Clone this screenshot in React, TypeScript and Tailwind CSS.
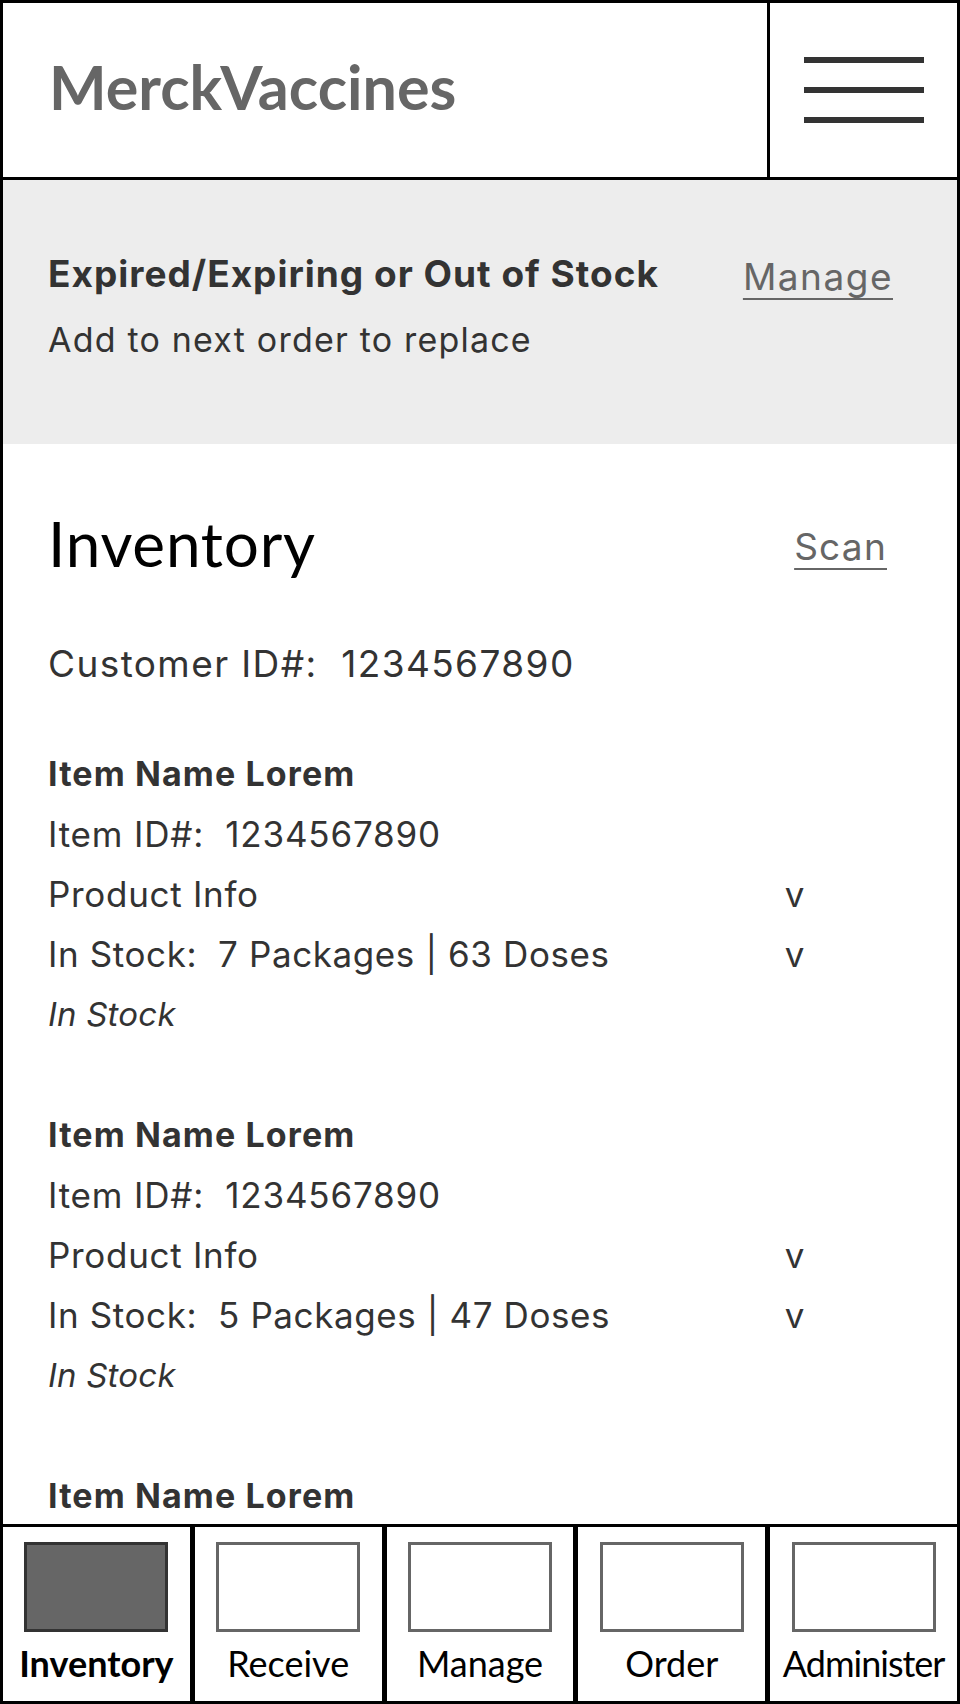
import React from 'react';

const items = [
  { name: 'Item Name Lorem', id: '1234567890', packages: 7, doses: 63, status: 'In Stock' },
  { name: 'Item Name Lorem', id: '1234567890', packages: 5, doses: 47, status: 'In Stock' },
  { name: 'Item Name Lorem', id: '1234567890', packages: 3, doses: 27, status: 'In Stock' },
];

const tabs = ['Inventory', 'Receive', 'Manage', 'Order', 'Administer'];

const InventoryItem: React.FC<{ item: (typeof items)[number] }> = ({ item }) => (
  <div className="mb-[61px] text-[#333]">
    <div className="text-[34px] font-bold leading-[60px] tracking-[1.1px]">{item.name}</div>
    <div className="text-[35px] leading-[60px] tracking-[0.8px] whitespace-pre">Item ID#:  {item.id}</div>
    <div className="flex justify-between pr-[82px] text-[35px] leading-[60px] tracking-[0.7px]">
      <span>Product Info</span>
      <span>v</span>
    </div>
    <div className="flex justify-between pr-[82px] text-[35px] leading-[60px] tracking-[0.6px]">
      <span className="whitespace-pre">
        In Stock:  {item.packages} Packages | {item.doses} Doses
      </span>
      <span>v</span>
    </div>
    <div className="text-[33px] italic leading-[60px] tracking-[0.2px]">{item.status}</div>
  </div>
);

const App: React.FC = () => {
  return (
    <div
      className="h-[1704px] w-[960px] border-[3px] border-black bg-white flex flex-col overflow-hidden"
      style={{ fontFamily: 'Inter, "Noto Sans", sans-serif' }}
    >
      {/* header */}
      <header className="h-[177px] shrink-0 flex border-b-[3px] border-black">
        <div
          className="flex-1 flex items-center pl-[46px] pb-[6px] text-[61px] font-bold text-[#666]"
          style={{ fontFamily: 'Lato, sans-serif' }}
        >
          MerckVaccines
        </div>
        <div className="w-[190px] border-l-[3px] border-black flex flex-col items-center justify-center gap-[24px]">
          <div className="w-[120px] h-[6px] bg-[#333]" />
          <div className="w-[120px] h-[6px] bg-[#333]" />
          <div className="w-[120px] h-[6px] bg-[#333]" />
        </div>
      </header>

      {/* alert banner */}
      <section className="h-[264px] shrink-0 bg-[#ededed] pt-[72px] pl-[45px] pr-[64px] text-[#333]">
        <div className="flex justify-between items-start">
          <h2 className="text-[37px] font-bold leading-[44px] tracking-[1px]">Expired/Expiring or Out of Stock</h2>
          <a className="mt-[3px] text-[37px] leading-[44px] tracking-[1.5px] text-[#666] underline underline-offset-[8px] decoration-2">
            Manage
          </a>
        </div>
        <p className="mt-[19px] text-[34px] leading-[44px] tracking-[1.2px]">Add to next order to replace</p>
      </section>

      {/* inventory list */}
      <main className="flex-1 overflow-hidden pt-[63px] pl-[45px] pr-[70px]">
        <div className="flex justify-between items-start">
          <h1
            className="text-[62px] leading-[72px] tracking-[0.8px] text-black"
            style={{ fontFamily: 'Lato, sans-serif' }}
          >
            Inventory
          </h1>
          <a className="mt-[18px] text-[37px] leading-[44px] tracking-[1.25px] text-[#666] underline underline-offset-[8px] decoration-2">
            Scan
          </a>
        </div>
        <div className="mt-[55px] mb-[50px] text-[37px] leading-[60px] tracking-[1.4px] text-[#333] whitespace-pre">
          Customer ID#:  1234567890
        </div>
        {items.map((item, i) => (
          <InventoryItem key={i} item={item} />
        ))}
      </main>

      {/* bottom tabs */}
      <nav
        className="h-[177px] shrink-0 border-t-[3px] border-black bg-black grid grid-cols-5 gap-[5px]"
        style={{ fontFamily: 'Lato, sans-serif' }}
      >
        {tabs.map((tab, i) => (
          <div key={tab} className="bg-white flex flex-col items-center pt-[15px] overflow-hidden">
            <div
              className={
                i === 0
                  ? 'w-[144px] h-[90px] shrink-0 border-[3px] border-[#333] bg-[#666]'
                  : 'w-[144px] h-[90px] shrink-0 border-[3px] border-[#666] bg-white'
              }
            />
            <span
              className={
                i === 0
                  ? 'mt-[10px] text-[36px] leading-[42px] font-bold text-black whitespace-nowrap'
                  : tab === 'Administer'
                    ? 'mt-[10px] text-[36px] leading-[42px] tracking-[-1px] text-black whitespace-nowrap'
                    : 'mt-[10px] text-[36px] leading-[42px] text-black whitespace-nowrap'
              }
            >
              {tab}
            </span>
          </div>
        ))}
      </nav>
    </div>
  );
};

export default App;
